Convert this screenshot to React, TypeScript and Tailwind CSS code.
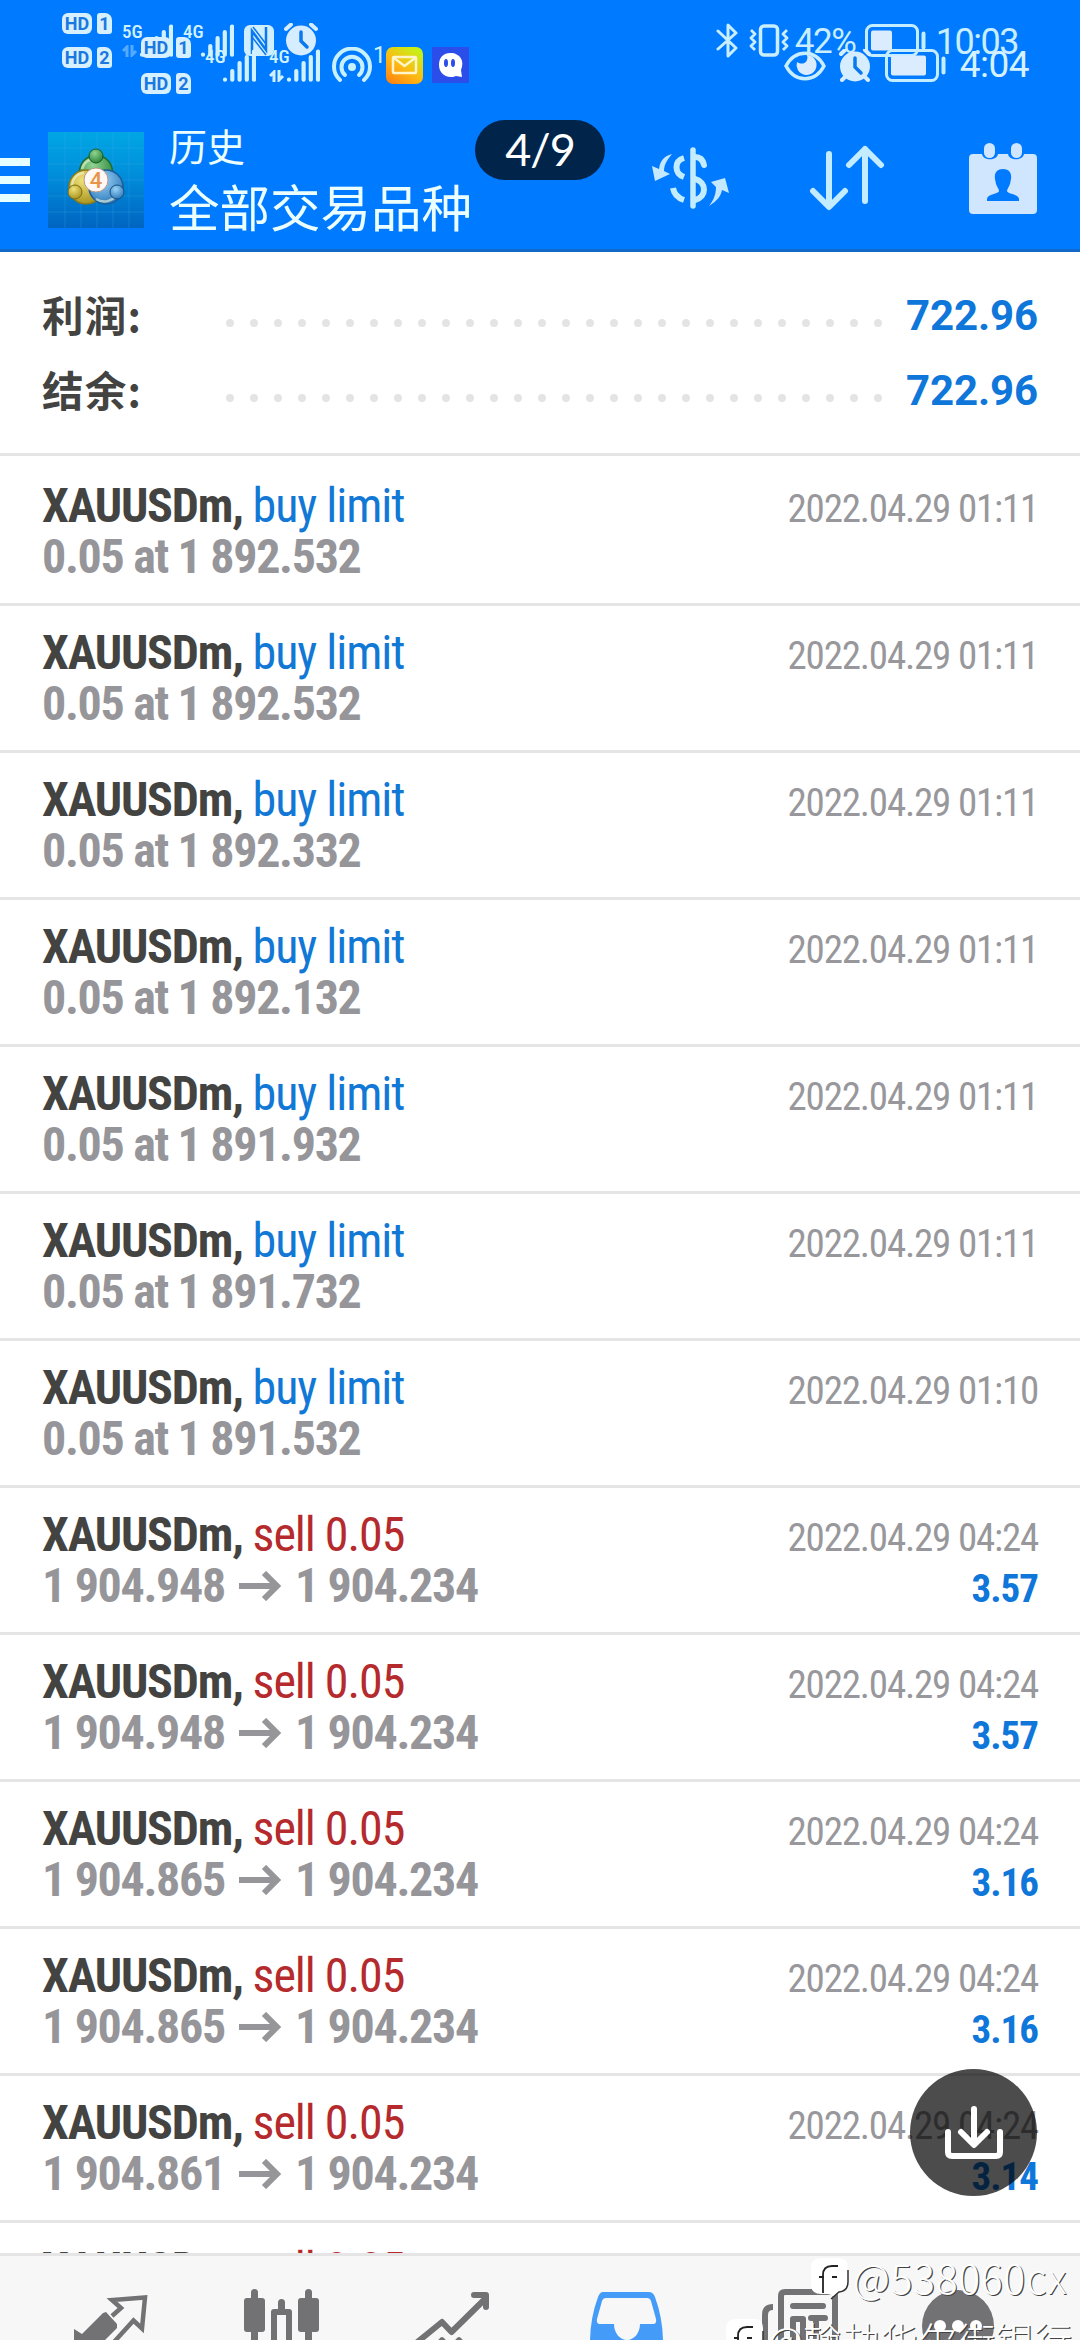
import React from 'react';
import { clsx } from 'clsx';

interface Deal {
  kind: 'limit' | 'sell';
  detail: string;
  to?: string;
  time: string;
  profit?: string;
}

const deals: Deal[] = [
  { kind: 'limit', detail: '0.05 at 1 892.532', time: '2022.04.29 01:11' },
  { kind: 'limit', detail: '0.05 at 1 892.532', time: '2022.04.29 01:11' },
  { kind: 'limit', detail: '0.05 at 1 892.332', time: '2022.04.29 01:11' },
  { kind: 'limit', detail: '0.05 at 1 892.132', time: '2022.04.29 01:11' },
  { kind: 'limit', detail: '0.05 at 1 891.932', time: '2022.04.29 01:11' },
  { kind: 'limit', detail: '0.05 at 1 891.732', time: '2022.04.29 01:11' },
  { kind: 'limit', detail: '0.05 at 1 891.532', time: '2022.04.29 01:10' },
  { kind: 'sell', detail: '1 904.948', to: '1 904.234', time: '2022.04.29 04:24', profit: '3.57' },
  { kind: 'sell', detail: '1 904.948', to: '1 904.234', time: '2022.04.29 04:24', profit: '3.57' },
  { kind: 'sell', detail: '1 904.865', to: '1 904.234', time: '2022.04.29 04:24', profit: '3.16' },
  { kind: 'sell', detail: '1 904.865', to: '1 904.234', time: '2022.04.29 04:24', profit: '3.16' },
  { kind: 'sell', detail: '1 904.861', to: '1 904.234', time: '2022.04.29 04:24', profit: '3.14' },
  { kind: 'sell', detail: '1 904.861', to: '1 904.234', time: '2022.04.29 04:24' },
];

const summary = [
  { label: '利润:', value: '722.96' },
  { label: '结余:', value: '722.96' },
];

/* ---------- status bar ---------- */

function SimTag({ n, className }: { n: string; className?: string }) {
  return (
    <div className={clsx('flex gap-[5px] font-["Roboto"] font-bold leading-none text-[#1a78e0]', className)}>
      <span className="flex h-[21px] w-[30px] items-center justify-center rounded-[6px] bg-[#d6f0ff] text-[18px]">HD</span>
      <span className="flex h-[21px] w-[15px] items-center justify-center rounded-[3px] rounded-tr-[7px] bg-[#d6f0ff] text-[18px]">{n}</span>
    </div>
  );
}

function Signal({ label, className, arrows }: { label: string; className?: string; arrows?: string }) {
  return (
    <div className={clsx('flex h-[33px] w-[52px] text-[#d0f2ff]', className)}>
      <div className="flex w-[17px] flex-col justify-between">
        <span className="font-['Roboto'] text-[19px] font-medium leading-[15px] font-stretch-condensed">{label}</span>
        {arrows && (
          <svg width="16" height="12" viewBox="0 0 16 12" className={arrows} fill="none" stroke="currentColor" strokeWidth="3">
            <path d="M5 12V2L1 6M10 0v10l4-4" />
          </svg>
        )}
      </div>
      <svg width="34" height="33" viewBox="0 0 34 33" className="shrink-0" stroke="currentColor" strokeWidth="4.2" strokeLinecap="round">
        <path d="M3 30.5v.2M10.3 22v8.7M17.6 14v16.7M24.8 8v22.7M32 2.500v28.200" />
      </svg>
    </div>
  );
}

function AlarmGlyph({ className, flip }: { className?: string; flip?: boolean }) {
  return (
    <svg width="34" height="33" viewBox="0 0 34 33" className={className}>
      <circle cx="17" cy="17.500" r="15" fill="#d6ecff" />
      <path d={flip ? 'M4 31l3-3M30 31l-3-3M3 5l4-4M27 1l4 4' : 'M2 6l5-4.500M32 6l-5-4.500'} stroke="#d6ecff" strokeWidth="4" strokeLinecap="round" />
      <path d="M17 9v9l6 6" fill="none" stroke="#0a78ee" strokeWidth="3.500" strokeLinecap="round" />
    </svg>
  );
}

function Battery({ fill, className }: { fill: number; className?: string }) {
  return (
    <svg width="62" height="33" viewBox="0 0 62 33" className={className}>
      <rect x="1.500" y="1.500" width="51" height="30" rx="6" fill="none" stroke="#c4eeff" strokeWidth="3" />
      <rect x="6" y="6.500" width={fill} height="20" rx="2" fill="#dcecff" />
      <path d="M58.500 9.500v14" stroke="#c4eeff" strokeWidth="4" strokeLinecap="round" />
    </svg>
  );
}

function StatusBack() {
  return (
    <div className="flex h-[110px] items-start pl-[62px] pr-[62px] pt-[13px]">
      <div className="flex flex-col gap-[13px]">
        <SimTag n="1" />
        <SimTag n="2" />
      </div>
      <Signal label="5G" arrows="opacity-40" className="ml-[10px] mt-[11px]" />
      <Signal label="4G" className="ml-[9px] mt-[11px]" />
      <svg width="30" height="31" viewBox="0 0 30 31" className="ml-[9px] mt-[12px]">
        <rect width="30" height="31" rx="6" fill="#cfeeff" />
        <path d="M8 29V6l14 19V2" fill="none" stroke="#0a78ee" strokeWidth="2.500" />
        <path d="M9 2l13 17M8 12l14 18" fill="none" stroke="#0a78ee" strokeWidth="1.500" />
      </svg>
      <AlarmGlyph className="ml-[10px] mt-[10px]" />
      <div className="ml-auto flex items-start text-[#c8eeff]">
        <svg width="24" height="35" viewBox="0 0 24 35" className="mt-[10px]" fill="none" stroke="currentColor" strokeWidth="3" strokeLinejoin="round" strokeLinecap="round">
          <path d="M2 8l18 17-8 8V2l8 8L2 26" />
        </svg>
        <svg width="40" height="33" viewBox="0 0 40 33" className="ml-[9px] mt-[11px]" fill="none" stroke="currentColor" strokeWidth="3.500" strokeLinejoin="round">
          <rect x="11.500" y="2" width="17" height="29" rx="3.500" />
          <path d="M2 6l4 4-4 4 4 4-4 4 4 4M38 6l-4 4 4 4-4 4 4 4-4 4" strokeWidth="2.800" />
        </svg>
        <span className="ml-[6px] mt-[11px] w-[70px] whitespace-nowrap font-['Roboto'] text-[35px] leading-[36px] tracking-[-1.500px]">42%</span>
        <Battery fill={21} className="mt-[11px]" />
        <span className="ml-[9px] mt-[11px] font-['Roboto'] text-[36px] leading-[36px] tracking-[-1.500px]">10:03</span>
      </div>
    </div>
  );
}

// second bar, shifted and laid over the first one
function StatusFront() {
  return (
    <div className="absolute inset-x-0 top-0 flex items-start pl-[141px] pr-[51px] pt-[37px]">
      <div className="flex flex-col gap-[15px]">
        <SimTag n="1" />
        <SimTag n="2" />
      </div>
      <Signal label="4G" className="ml-[14px] mt-[12px]" />
      <Signal label="4G" arrows="opacity-100" className="ml-[12px] mt-[12px]" />
      <svg width="40" height="36" viewBox="0 0 40 36" className="ml-[11px] mt-[10px]" fill="none" stroke="#c8f0ff" strokeWidth="4" strokeLinecap="round">
        <circle cx="20" cy="20" r="3" fill="#c8f0ff" strokeWidth="2" />
        <path d="M13 28a10.500 10.500 0 1 1 14 0" />
        <path d="M8 33a18 18 0 1 1 24 0" />
      </svg>
      <span className="ml-[1px] mt-[10px] w-[13px] font-['Roboto'] text-[23px] leading-[18px] text-[#c8f0ff]">1</span>
      <svg width="37" height="37" viewBox="0 0 37 37" className="mt-[10px]">
        <defs>
          <linearGradient id="mail" x1="0" y1="1" x2=".7" y2="0">
            <stop offset="0" stopColor="#ff7a10" />
            <stop offset=".5" stopColor="#fdb813" />
            <stop offset="1" stopColor="#c8f018" />
          </linearGradient>
        </defs>
        <rect width="37" height="37" rx="7" fill="url(#mail)" />
        <rect x="7" y="10" width="23" height="16" rx="1" fill="none" stroke="#fff5c8" strokeWidth="2.500" />
        <path d="M8 11l10.500 8L29 11" fill="none" stroke="#fff5c8" strokeWidth="2.500" />
      </svg>
      <svg width="37" height="36" viewBox="0 0 37 36" className="ml-[9px] mt-[10px]">
        <rect width="37" height="36" fill="#2b4dea" />
        <path d="M18.500 6C10 6 7 12 7 18s4 12 12 12c2 0 4-.5 5-1l6 1-1-7c4-9-1-17-10.500-17z" fill="#fff" />
        <ellipse cx="14" cy="16" rx="2" ry="4" fill="#2b4dea" />
        <ellipse cx="21" cy="16" rx="2" ry="4" fill="#2b4dea" />
      </svg>
      <div className="ml-auto flex items-start">
        <svg width="42" height="30" viewBox="0 0 42 30" className="mt-[14px]">
          <path d="M2 15C11-2 31-2 40 15 31 32 11 32 2 15z" fill="none" stroke="#c8eeff" strokeWidth="3.500" />
          <path d="M13 11a10 10 0 1 0 10-7c2 7-4 11-10 7z" fill="#dcecff" />
        </svg>
        <AlarmGlyph flip className="ml-[12px] mt-[12px]" />
        <Battery fill={35} className="ml-[13px] mt-[12px]" />
        <span className="ml-[13px] mt-[9px] font-['Roboto'] text-[37px] leading-[38px] tracking-[-0.5px] text-[#d4f2ff]">4:04</span>
      </div>
    </div>
  );
}

/* ---------- header ---------- */

function AppLogo() {
  return (
    <svg width="96" height="96" viewBox="0 0 96 96" className="ml-[18px] shrink-0">
      <defs>
        <linearGradient id="sky" x1="0" y1="0" x2="0" y2="1">
          <stop offset="0" stopColor="#00a6e4" />
          <stop offset=".4" stopColor="#0091dc" />
          <stop offset="1" stopColor="#0064c0" />
        </linearGradient>
        <radialGradient id="green" cx=".4" cy=".3" r=".8">
          <stop offset="0" stopColor="#8fd492" />
          <stop offset="1" stopColor="#1f7a30" />
        </radialGradient>
        <radialGradient id="gold" cx=".4" cy=".3" r=".8">
          <stop offset="0" stopColor="#efe27a" />
          <stop offset="1" stopColor="#a08a14" />
        </radialGradient>
        <radialGradient id="azure" cx=".4" cy=".3" r=".8">
          <stop offset="0" stopColor="#9ad2f6" />
          <stop offset="1" stopColor="#2270b4" />
        </radialGradient>
      </defs>
      <rect width="96" height="96" fill="url(#sky)" />
      <path d="M17 0v96M33 0v96M49 0v96M65 0v96M81 0v96M0 16h96M0 32h96M0 48h96M0 64h96M0 80h96" stroke="#3fb4f0" strokeOpacity=".25" />
      <circle cx="48" cy="40" r="16.500" fill="url(#green)" stroke="#1f6a2c" strokeWidth="1.500" />
      <circle cx="38" cy="55" r="17" fill="url(#gold)" stroke="#8a7a18" strokeWidth="1.500" />
      <circle cx="58" cy="55" r="17" fill="url(#azure)" stroke="#1c5c98" strokeWidth="1.500" />
      <path d="M34 37c2-8 8-10 14-10M24 55c0-8 5-14 12-14M48 67c8 5 17 2 23-6" fill="none" stroke="#f4f8d8" strokeOpacity=".6" strokeWidth="2.500" />
      <circle cx="48" cy="24" r="7" fill="url(#green)" stroke="#1b5a24" />
      <circle cx="27" cy="60" r="7" fill="url(#gold)" stroke="#7c6c10" />
      <circle cx="69" cy="60" r="7" fill="url(#azure)" stroke="#174e80" />
      <circle cx="48" cy="48" r="12" fill="#fff8f4" stroke="#b89888" />
      <text x="48" y="56" textAnchor="middle" fontFamily="Roboto" fontSize="22" fontWeight="500" fill="#e8954a">4</text>
    </svg>
  );
}

function Toolbar() {
  return (
    <div className="flex h-[139px] items-center">
      <div className="flex flex-col gap-[10px]">
        <span className="h-2 w-[30px] bg-[#e6ffff]" />
        <span className="h-2 w-[30px] bg-[#e6ffff]" />
        <span className="h-2 w-[30px] bg-[#e6ffff]" />
      </div>
      <AppLogo />
      <div className="ml-[25px] flex w-[310px] flex-col whitespace-nowrap pb-[6px] font-['Noto_Sans_CJK_SC',sans-serif] text-[#ebffff]">
        <span className="text-[38px] leading-[56px]">历史</span>
        <span className="text-[50.500px] leading-[64px]">全部交易品种</span>
      </div>
      <svg width="80" height="64" viewBox="0 0 80 64" className="mb-[4px] ml-[172px] shrink-0" fill="none" stroke="#c4ecff">
        <path d="M42 4v56" strokeWidth="5.500" strokeLinecap="round" />
        <path d="M33 12c-10 3-10 15 0 19M22 42c1 6 5 10 11 12" strokeWidth="6" />
        <path d="M44 11c5 0 8 3 9 8M44 33c12 3 12 18 0 21" strokeWidth="6" strokeLinecap="round" />
        <path d="M21 8C13 10 9 15 8 23l-7-3 3 15 15-7-6-3c0-7 4-12 8-17zM58 60c8-5 12-10 13-16l7 3-4-15-14 4 5 5c0 8-3 14-7 19z" fill="#c4e8ff" stroke="none" />
      </svg>
      <svg width="76" height="66" viewBox="0 0 76 66" className="mb-[3px] ml-[78px] shrink-0" fill="none" stroke="#c4ecff" strokeWidth="6" strokeLinecap="round" strokeLinejoin="round">
        <path d="M20 9v52M4 46l16 16 16-16M56 56V4M40 20L56 4l16 16" />
      </svg>
      <svg width="68" height="72" viewBox="0 0 68 72" className="mb-px ml-[84px] shrink-0">
        <path d="M4 11h9c1 7 15 7 16 0h10c1 7 15 7 16 0h9q4 0 4 4v52q0 4-4 4H4q-4 0-4-4V15q0-4 4-4z" fill="#d0e6ff" />
        <rect x="15" y="0" width="11" height="15" rx="5.500" fill="#d0e6ff" />
        <rect x="42" y="0" width="11" height="15" rx="5.500" fill="#d0e6ff" />
        <path d="M34 26c-6 0-9 4-8 10l1 5c1 3 3 5 3 7 0 3-12 3-12 8v2h32v-2c0-5-12-5-12-8 0-2 2-4 3-7l1-5c1-6-2-10-8-10z" fill="#007aff" />
      </svg>
    </div>
  );
}

/* ---------- list ---------- */

function SummaryLine({ label, value }: { label: string; value: string }) {
  return (
    <div className="flex h-[75px] items-center justify-between pl-[42px] pr-[42px]">
      <span className="w-[184px] pb-[3px] font-['Noto_Sans_CJK_SC',sans-serif] text-[41.500px] font-bold leading-[72px] tracking-[1.200px] text-[#434442]">{label}</span>
      <svg width="656" height="8" className="mt-[14px]">
        {Array.from({ length: 28 }, (_, i) => <circle key={i} cx={4 + i * 24} cy="4" r="4" fill="#e4e4e4" />)}
      </svg>
      <span className="flex-1 text-right text-[42px] font-bold leading-[75px] tracking-[-0.100px] text-[#0f76da]">{value}</span>
    </div>
  );
}

function Arrow() {
  return (
    <svg width="42" height="30" viewBox="0 0 42 30" className="mx-[14px] inline-block" fill="none" stroke="#96969a" strokeWidth="6">
      <path d="M0 15h38M25 2l13 13-13 13" />
    </svg>
  );
}

function DealRow({ deal, first }: { deal: Deal; first?: boolean }) {
  return (
    <div className={clsx('shrink-0 border-b-[3px] border-[#e5e5e5] px-[42px] font-stretch-condensed', first ? 'h-[150px] pt-6' : 'h-[147px] pt-[21px]')}>
      <div className="flex h-[51px] items-baseline justify-between leading-[51px]">
        <p className="whitespace-pre text-[48px]">
          <span className="font-bold tracking-[-1.200px] text-[#434442]">XAUUSDm, </span>
          <span className={clsx('tracking-[-1.050px]', deal.kind === 'sell' ? 'text-[#b52a2c]' : 'text-[#1278d6]')}>{deal.kind === 'sell' ? 'sell 0.05' : 'buy limit'}</span>
        </p>
        <span className="text-[39px] tracking-[-1.200px] text-[#98989c]">{deal.time}</span>
      </div>
      <div className="flex h-[51px] items-baseline justify-between font-bold leading-[51px]">
        <p className="flex items-center text-[48px] tracking-[-1.320px] text-[#96969a]">
          {deal.detail}
          {deal.to && <Arrow />}
          {deal.to}
        </p>
        {deal.profit && <span className="text-[39px] tracking-[-1px] text-[#0f76da]">{deal.profit}</span>}
      </div>
    </div>
  );
}

/* ---------- bottom tabs ---------- */

const tabIcons: React.ReactNode[] = [
  <>
    <path d="M47 60l9-8-9-8 33-2.500-3 31-8.500-8L49 86" fill="none" stroke="#727174" strokeWidth="4.500" />
    <path d="M9 73l8 5 21-21 3-1 11 12v4L38 86H9z" fill="#727174" />
  </>,
  <g fill="#727174">
    <rect x="7" y="42" width="21" height="34" rx="3" />
    <rect x="14" y="33" width="7" height="60" rx="3.500" />
    <rect x="61" y="42" width="21" height="34" rx="3" />
    <rect x="68" y="33" width="7" height="60" rx="3.500" />
    <rect x="41" y="43" width="7" height="16" rx="3.500" />
    <path d="M37 56h15v34H37z" fill="none" stroke="#727174" strokeWidth="6" strokeLinejoin="round" />
  </g>,
  <g fill="none" stroke="#727174" strokeWidth="6" strokeLinejoin="round" strokeLinecap="round">
    <path d="M6 88l27-22 9.500 10L77 42" />
    <path d="M65 39h12v12" />
    <path d="M33 83l-5 5h10zM50 83l-5 5h10z" strokeWidth="4" />
  </g>,
  <>
    <path d="M22 36h46q4 0 6 5 8 22 8 45H9q0-23 8-45 2-5 5-5z" fill="#459cf8" />
    <path d="M25 42h41q3 0 4 3l5 18q1 5-3 5H59c0 9-6 16-13 16S33 77 33 68H19q-4 0-3-5l5-18q1-3 4-3z" fill="#f7f7f7" />
  </>,
  <g fill="none" stroke="#727174" strokeWidth="6">
    <path d="M28 90V40q0-4 4-4h46q4 0 4 4v50" />
    <path d="M20 51q-8 0-8 8v30" />
    <path d="M40 50h30" strokeLinecap="round" />
    <path d="M40 90V63h10v27M58 62h14M63 62v25" strokeLinecap="round" strokeLinejoin="round" />
  </g>,
  <>
    <circle cx="33" cy="70" r="36" fill="#727174" />
    <circle cx="15" cy="70" r="6" fill="#fff" />
    <circle cx="33" cy="70" r="6" fill="#fff" />
    <circle cx="51" cy="70" r="6" fill="#fff" />
  </>,
];

function Stamp({ children, className }: { children: React.ReactNode; className?: string }) {
  return (
    <div className={clsx('absolute flex items-center whitespace-nowrap font-["Noto_Sans_CJK_SC",sans-serif] font-light text-white [text-shadow:1.2px_1.2px_0_#444]', className)}>
      <svg width="37" height="38" viewBox="0 0 37 38" className="mr-[5px] overflow-visible">
        <path d="M10 0h18q9 0 9 9v15q0 9-9 10l-6 5q-2-3-6-3h-6Q0 36 0 26V10Q0 0 10 0z" fill="#fff" />
        <path d="M37 12v12q0 9-9 10l-8 7" fill="none" stroke="#333" strokeWidth="1.500" />
        <path d="M12 35V17q0-9 9-9h6M8 19h5M21 19h5" fill="none" stroke="#222" strokeWidth="1.800" />
      </svg>
      {children}
    </div>
  );
}

export default function App() {
  return (
    <div className="relative flex h-[2340px] w-[1080px] flex-col overflow-hidden bg-white font-['Roboto',sans-serif]">
      <header className="relative h-[252px] shrink-0 border-b-[3px] border-[#1268c8] bg-[#007aff]">
        <StatusBack />
        <StatusFront />
        <Toolbar />
        <div className="absolute left-[475px] top-[120px] flex h-[60px] w-[130px] items-center justify-center rounded-full bg-[#00244a] pb-[2px] font-['Lato'] text-[45px] leading-none tracking-[-1px] text-white">4/9</div>
      </header>

      <section className="h-[204px] shrink-0 border-b-[3px] border-[#e5e5e5] pt-[26px]">
        {summary.map(s => <SummaryLine key={s.label} {...s} />)}
      </section>

      <main className="flex min-h-0 flex-1 flex-col overflow-hidden">
        {deals.map((d, i) => <DealRow key={i} deal={d} first={i === 0} />)}
      </main>

      <nav className="flex h-[87px] shrink-0 overflow-hidden border-t-[3px] border-[#e5e5e5] bg-[#f7f7f7] px-6">
        {tabIcons.map((icon, i) => (
          <div key={i} className="flex flex-1 justify-center">
            <svg width="90" height="84" viewBox="0 0 90 84" className="overflow-visible">{icon}</svg>
          </div>
        ))}
      </nav>

      <button className="absolute left-[910px] top-[2069px] flex h-[127px] w-[127px] items-center justify-center rounded-full bg-black/70">
        <svg width="60" height="56" viewBox="0 0 60 56" fill="none" stroke="#fff" strokeWidth="6" strokeLinecap="round" strokeLinejoin="round">
          <path d="M30 4v35M17 27l13 13 13-13M4 27v20q0 4 4 4h44q4 0 4-4V27" />
        </svg>
      </button>

      <Stamp className="left-[811px] top-[2252px] h-[56px] pb-[6px] text-[40.500px] tracking-[0.900px]">@538060cx</Stamp>
      <Stamp className="left-[726px] top-[2310px] h-[56px] text-[38px] tracking-[0.500px]">@翰劫华尔街银行</Stamp>
    </div>
  );
}
